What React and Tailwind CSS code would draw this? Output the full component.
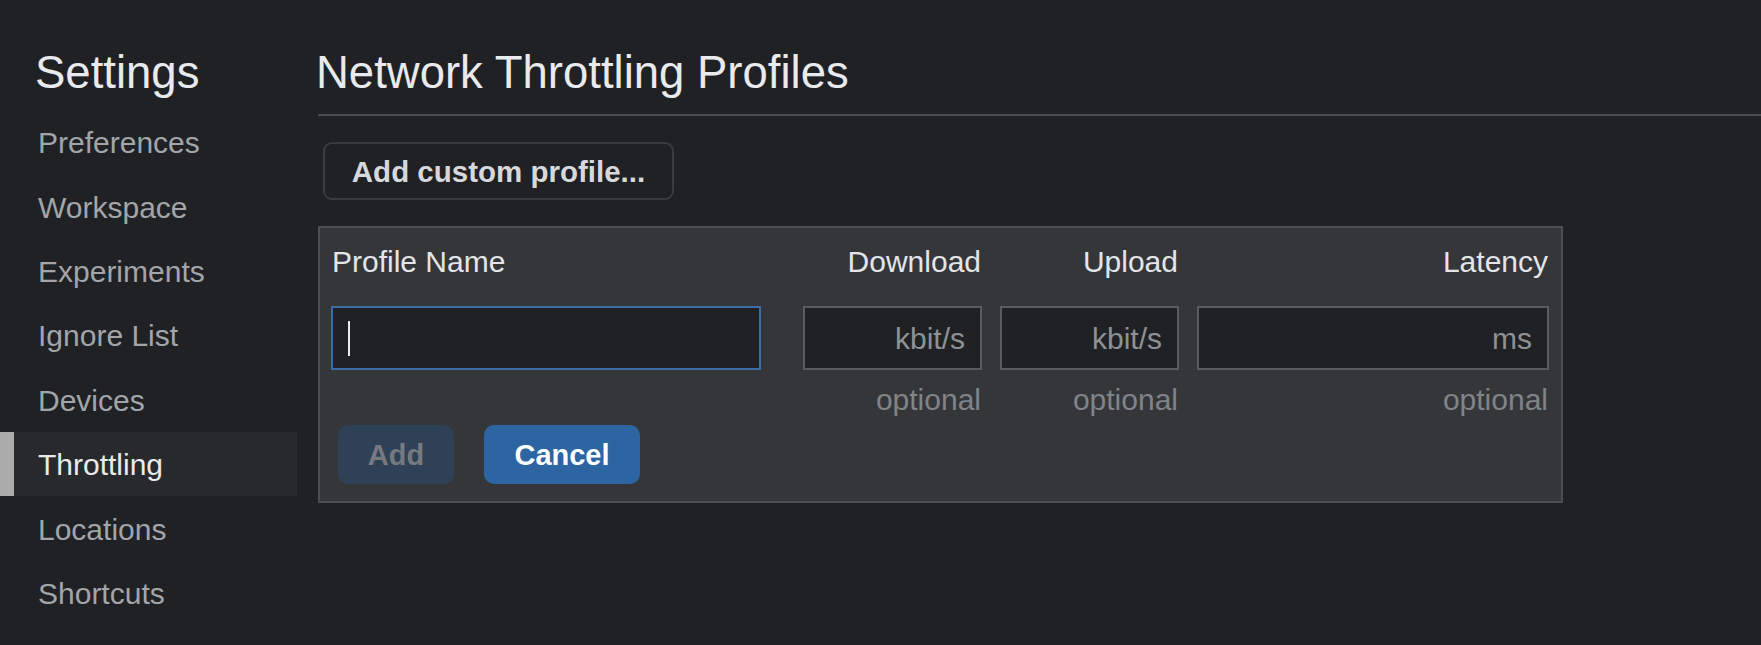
export default function App() {
  const items = [
    "Preferences",
    "Workspace",
    "Experiments",
    "Ignore List",
    "Devices",
    "Throttling",
    "Locations",
    "Shortcuts",
  ];
  const cols = [
    { label: "Download", unit: "kbit/s", w: "w-[179px]", ml: "ml-[42px]" },
    { label: "Upload", unit: "kbit/s", w: "w-[179px]", ml: "ml-[18px]" },
    { label: "Latency", unit: "ms", w: "w-[352px]", ml: "ml-[18px]" },
  ];
  return (
    <div className="flex h-[645px] w-full overflow-hidden bg-[#202124] font-['Liberation_Sans',Arial,sans-serif]">
      <aside className="w-[297px] shrink-0 pt-[46px]">
        <div className="h-[54px] pl-[35px] text-[45.5px] leading-[54px] text-[#e8eaed]">
          Settings
        </div>
        <div className="mt-[10px] flex flex-col">
          {items.map((it) => {
            const sel = it === "Throttling";
            return (
              <div
                key={it}
                className={
                  sel
                    ? "flex h-[64.4px] items-center bg-[#28292d]"
                    : "flex h-[64.4px] items-center"
                }
              >
                <div
                  className={
                    sel ? "h-full w-[14px] bg-[#ababab]" : "h-full w-[14px]"
                  }
                />
                <span
                  className={
                    sel
                      ? "pl-[24px] pt-[1px] text-[30px] text-[#e8eaed]"
                      : "pl-[24px] pt-[1px] text-[30px] text-[#a2a5a9]"
                  }
                >
                  {it}
                </span>
              </div>
            );
          })}
        </div>
      </aside>

      <main className="ml-[21px] flex-1 pt-[46px]">
        <div className="border-b-2 border-[#4a4b4f] pb-[14px]">
          <div className="h-[54px] text-[45.5px] leading-[54px] text-[#e8eaed]">
            <span className="-ml-[2px]">Network Throttling Profiles</span>
          </div>
        </div>

        <button className="ml-[5px] mt-[26px] flex h-[58px] w-[351px] items-center justify-center rounded-[9px] border-2 border-[#3a3b3f] bg-[#202124] pt-[2px] text-[29.5px] font-bold text-[#d6d8db]">
          Add custom profile...
        </button>

        <div className="mt-[26px] w-[1245px] border-2 border-[#4d4e52] bg-[#35363a] pb-[17px] pl-[11px] pt-[13px]">
          <div className="flex">
            <div className="flex w-[430px] flex-col">
              <div className="h-[40px] pl-[1px] pt-[1px] text-[30px] leading-[40px] text-[#e3e5e8]">
                Profile Name
              </div>
              <div className="mt-[25px] flex h-[64px] items-center border-2 border-[#3b6ea6] bg-[#202124] pl-[15px]">
                <div className="h-[35px] w-[2px] bg-[#e8eaed]" />
              </div>
              <div className="mt-[15px] h-[30px]" />
            </div>
            {cols.map((c) => (
              <div key={c.label} className={`flex flex-col ${c.w} ${c.ml}`}>
                <div className="h-[40px] pr-[1px] pt-[1px] text-right text-[30px] leading-[40px] text-[#e3e5e8]">
                  {c.label}
                </div>
                <div className="mt-[25px] flex h-[64px] items-center justify-end border-2 border-[#5a5b5f] bg-[#202124] pr-[15px] pt-[1px] text-[30px] text-[#8e9195]">
                  {c.unit}
                </div>
                <div className="mt-[15px] h-[30px] pr-[1px] text-right text-[30px] leading-[30px] text-[#808387]">
                  optional
                </div>
              </div>
            ))}
          </div>
          <div className="ml-[7px] mt-[10px] flex">
            <button className="flex h-[59px] w-[116px] items-center justify-center rounded-[10px] bg-[#2e4156] pt-[3px] text-[29px] font-bold text-[#767a80]">
              Add
            </button>
            <button className="ml-[30px] flex h-[59px] w-[156px] items-center justify-center rounded-[10px] bg-[#2c65a1] pt-[3px] text-[29px] font-bold text-white">
              Cancel
            </button>
          </div>
        </div>
      </main>
    </div>
  );
}
